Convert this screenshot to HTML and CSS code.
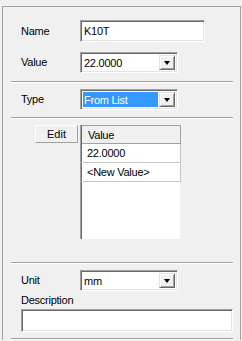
FILE: index.html
```html
<!DOCTYPE html>
<html lang="en">
  <head>
    <meta charset="UTF-8" />
    <meta name="viewport" content="width=device-width, initial-scale=1.0" />
    <title>Parameter</title>
    <link rel="stylesheet" href="styles.css">
  </head>
  <body>
    <div class="panel">
      <div class="row row-name">
        <span class="label">Name</span>
        <div class="field field-name">K10T</div>
      </div>
      <div class="row row-value">
        <span class="label">Value</span>
        <div class="field combo">
          <span class="combo-text">22.0000</span>
          <span class="combo-btn"><i class="arrow"></i></span>
        </div>
      </div>
      <div class="sep sep-1"></div>
      <div class="row row-type">
        <span class="label">Type</span>
        <div class="field combo">
          <span class="combo-text selected">From List</span>
          <span class="combo-btn"><i class="arrow"></i></span>
        </div>
      </div>
      <div class="sep sep-2"></div>
      <div class="row row-list">
        <div class="edit-col">
          <button class="edit-btn">Edit</button>
        </div>
        <div class="list">
          <div class="list-head">Value</div>
          <div class="list-row">22.0000</div>
          <div class="list-row">&lt;New Value&gt;</div>
        </div>
      </div>
      <div class="sep sep-3"></div>
      <div class="row row-unit">
        <span class="label">Unit</span>
        <div class="field combo">
          <span class="combo-text">mm</span>
          <span class="combo-btn"><i class="arrow"></i></span>
        </div>
      </div>
      <div class="desc-label">Description</div>
      <div class="field field-desc"></div>
      <div class="sep sep-4"></div>
    </div>
  </body>
</html>
```

FILE: styles.css
```css
body {
  margin: 0;
  background-color: #f0f0f0;
  font-family: "Liberation Sans", Arial, sans-serif;
  font-size: 11px;
  letter-spacing: -0.25px;
  color: #000;
}
.panel {
  margin: 6px 0 0 2px;
  width: 222px;
  padding: 0 7px 0 8px;
  border: 1px solid #a0a0a0;
  border-bottom: none;
}
.row {
  display: flex;
  align-items: center;
}
.label {
  width: 59px;
  padding-left: 10px;
  line-height: 13px;
}
.field {
  box-sizing: border-box;
  background-color: #fff;
  border: 1px solid;
  border-color: #a0a0a0 #fff #fff #a0a0a0;
  box-shadow: inset 1px 1px #696969, inset -1px -1px #e3e3e3;
}
.field-name {
  width: 125px;
  height: 22px;
  padding: 3px 0 0 3px;
  line-height: 14px;
}
.row-name {
  margin-top: 13px;
}
.row-value {
  margin-top: 10px;
}
.combo {
  width: 98px;
  height: 21px;
  display: flex;
  padding: 2px;
}
.combo-text {
  flex: 1;
  line-height: 17px;
  padding-left: 1px;
}
.combo-text.selected {
  background-color: #3399ff;
  color: #fff;
  margin-right: 1px;
}
.combo-btn {
  width: 16px;
  box-sizing: border-box;
  background-color: #f0f0f0;
  border: 1px solid;
  border-color: #e3e3e3 #696969 #696969 #e3e3e3;
  box-shadow: inset 1px 1px #fff, inset -1px -1px #a0a0a0;
  display: flex;
  align-items: center;
  justify-content: center;
}
.arrow {
  width: 0;
  height: 0;
  border-left: 3.5px solid transparent;
  border-right: 3.5px solid transparent;
  border-top: 4px solid #000;
  margin-top: 1px;
}
.sep {
  border-top: 1px solid #a0a0a0;
  border-bottom: 1px solid #fff;
}
.sep-1 {
  margin-top: 8px;
}
.row-type {
  margin-top: 6px;
}
.sep-2 {
  margin-top: 7px;
}
.row-list {
  margin-top: 6px;
  align-items: flex-start;
}
.edit-col {
  width: 69px;
}
.edit-btn {
  display: block;
  margin-left: 24px;
  width: 43px;
  height: 18px;
  padding: 0;
  font: inherit;
  color: #000;
  background-color: #f0f0f0;
  border: 1px solid;
  border-color: #fff #a0a0a0 #a0a0a0 #fff;
}
.list {
  width: 97px;
  height: 114px;
  background-color: #fff;
  border-left: 1px solid #a0a0a0;
  box-shadow: inset 1px 0 #696969;
  padding-right: 2px;
}
.list-head,
.list-row {
  width: 93px;
  padding-left: 6px;
  border-right: 1px solid #c8c8c8;
  border-bottom: 1px solid #c8c8c8;
}
.list-head {
  height: 17px;
  line-height: 19px;
  background-color: #f0f0f0;
  border-top: 1px solid #a0a0a0;
  border-right-color: #a0a0a0;
  border-bottom-color: #a0a0a0;
  margin-left: 1px;
  width: 92px;
}
.list-row {
  height: 18px;
  line-height: 18px;
}
.sep-3 {
  margin-top: 23px;
}
.row-unit {
  margin-top: 6px;
}
.desc-label {
  margin-top: 3px;
  padding-left: 10px;
  line-height: 13px;
}
.field-desc {
  margin: 2px 0 0 10px;
  height: 23px;
}
.sep-4 {
  margin-top: 6px;
}
```
